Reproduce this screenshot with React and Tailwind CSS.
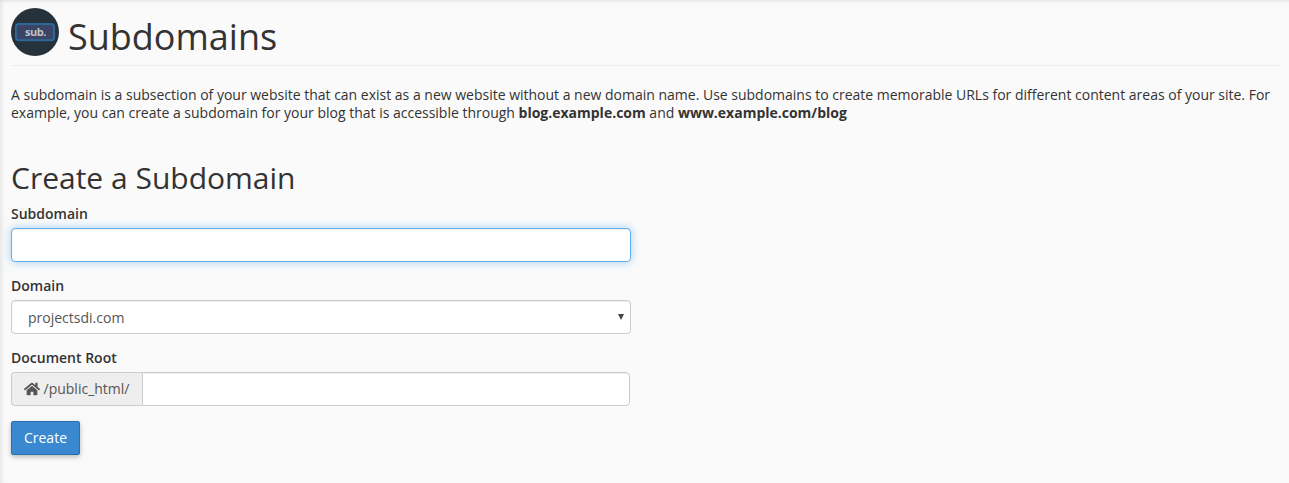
import { FaHome } from "react-icons/fa";

function Field({ label, children }) {
  return (
    <div className="mb-[15px] flex flex-col">
      <label className="mb-[5px] h-[18px] text-[14px] leading-[18px] font-semibold">{label}</label>
      {children}
    </div>
  );
}

export default function App() {
  return (
    <main className="h-[483px] overflow-hidden bg-[#fafafa] pt-2 pr-[9px] pl-[11px] font-['Open_Sans',sans-serif] text-[14px] leading-[18px] text-[#333] shadow-[inset_5px_0_5px_-4px_#dedede,inset_0_4px_4px_-4px_#d4d4d4]">
      <header className="flex h-[58px] border-b border-[#eee]">
        <svg className="mr-[9px] h-12 w-12 shrink-0" viewBox="0 0 48 48">
          <circle cx="24" cy="24" r="24" fill="#26323b" />
          <rect x="4.9" y="15.9" width="38.2" height="16.3" rx="3" fill="#3a4565" stroke="#2f6799" strokeWidth="2" />
          <text x="24.7" y="28.3" textAnchor="middle" textLength="21.5" fontFamily="Open Sans, sans-serif" fontSize="11" fontWeight="700" fill="#bfc1c6">sub.</text>
        </svg>
        <h1 className="mt-[9px] text-[36px] leading-[40px] font-normal">Subdomains</h1>
      </header>
      <p className="mt-5 h-9 whitespace-nowrap tracking-[-0.005px]">
        A subdomain is a subsection of your website that can exist as a new website without a new domain name. Use subdomains to create memorable URLs for different content areas of your site. For
        <br />
        example, you can create a subdomain for your blog that is accessible through <b className="font-bold">blog.example.com</b> and <b className="font-bold">www.example.com/blog</b>
      </p>
      <h2 className="mt-[39px] mb-3 h-[32px] text-[30px] leading-[33px] font-normal">Create a Subdomain</h2>
      <form className="w-[620px]">
        <Field label="Subdomain">
          <input className="h-[34px] w-full rounded-[4px] border border-[#66afe9] bg-white px-3 shadow-[inset_0_1px_1px_rgba(0,0,0,0.075),0_0_8px_rgba(102,175,233,0.6)] outline-none" />
        </Field>
        <Field label="Domain">
          <button type="button" className="flex h-[34px] w-full items-center justify-between rounded-[4px] border border-[#ccc] bg-white pr-[6px] pl-4 text-[#555] shadow-[inset_0_1px_1px_rgba(0,0,0,0.075)]">
            <span className="pt-px">projectsdi.com</span>
            <svg className="h-[6px] w-[6px]" viewBox="0 0 6 6"><path d="M0 0H6L3 6Z" fill="#444" /></svg>
          </button>
        </Field>
        <Field label="Document Root">
          <div className="flex h-[34px] w-[619px]">
            <span className="flex w-[131px] shrink-0 items-center rounded-l-[4px] border border-r-0 border-[#ccc] bg-[#eee] pl-3 text-[#555]">
              <FaHome className="mr-[3.5px] h-4 w-4" />
              /public_html/
            </span>
            <input className="min-w-0 flex-1 rounded-r-[4px] border border-[#ccc] bg-white px-3 shadow-[inset_0_1px_1px_rgba(0,0,0,0.075)] outline-none" />
          </div>
        </Field>
        <button type="button" className="flex h-[34px] w-[69px] items-center justify-center rounded-[2px] border border-[#2a6db0] bg-[#3a89d0] text-white shadow-[0_2px_5px_rgba(0,0,0,0.26)]">Create</button>
      </form>
    </main>
  );
}
